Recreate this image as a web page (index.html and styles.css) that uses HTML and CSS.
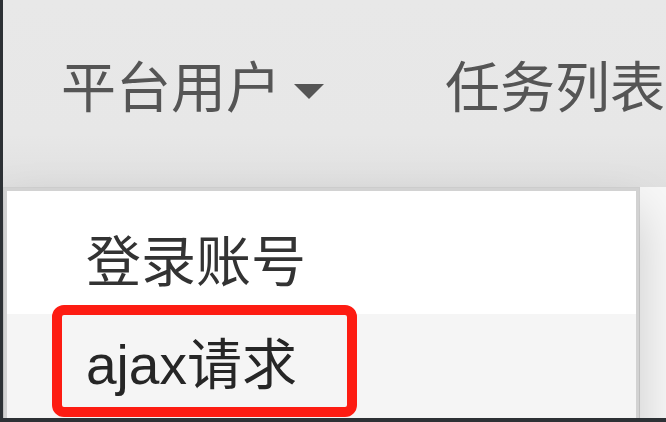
FILE: index.html
```html
<!DOCTYPE html>
<html lang="zh-CN">
<head>
<meta charset="utf-8">
<title>nav</title>
<link rel="stylesheet" href="styles.css">
</head>
<body>
<div class="frame">
  <nav class="navbar">
    <ul class="nav">
      <li class="nav-item open">
        <a class="nav-link" href="#">平台用户<span class="caret"></span></a>
        <ul class="dropdown-menu">
          <li><a class="menu-link" href="#">登录账号</a></li>
          <li><a class="menu-link active" href="#">ajax请求<span class="highlight"></span></a></li>
        </ul>
      </li>
      <li class="nav-item">
        <a class="nav-link" href="#">任务列表</a>
      </li>
    </ul>
  </nav>
</div>
</body>
</html>
```

FILE: styles.css
```css
* { box-sizing: border-box; }
html, body { margin: 0; padding: 0; }
body {
  width: 666px;
  height: 422px;
  overflow: hidden;
  background: #ffffff;
  font-family: "Liberation Sans", "Noto Sans CJK SC", sans-serif;
}
.frame {
  width: 666px;
  height: 422px;
  border-left: 3px solid #2d3135;
  border-bottom: 4px solid #2d3135;
  overflow: hidden;
  background: #f7f7f7;
}
.navbar {
  height: 187px;
  background: linear-gradient(to bottom, #e8e8e8 0, #e7e7e7 72%, #e0e0e0 100%);
}
.nav {
  list-style: none;
  margin: 0;
  padding: 0;
  display: flex;
  height: 100%;
  white-space: nowrap;
}
.nav-item {
  position: relative;
  height: 100%;
}
.nav-link {
  display: flex;
  align-items: center;
  height: 100%;
  padding: 0 63px 10px 58px;
  font-size: 55px;
  line-height: 79px;
  color: #555555;
  text-decoration: none;
}
.caret {
  display: inline-block;
  width: 0;
  height: 0;
  margin-left: 13px;
  margin-top: 6px;
  border-top: 15px solid #555555;
  border-left: 15px solid transparent;
  border-right: 15px solid transparent;
}
.dropdown-menu {
  position: absolute;
  top: 100%;
  left: 0;
  width: 637px;
  margin: 0;
  padding: 20px 0 0;
  list-style: none;
  background: #ffffff;
  background-clip: padding-box;
  border: 4px solid rgba(0, 0, 0, 0.15);
  box-shadow: 0 24px 47px rgba(0, 0, 0, 0.175);
  height: 260px;
}
.menu-link {
  position: relative;
  display: block;
  padding: 12px 79px;
  font-size: 55px;
  line-height: 79px;
  color: #333333;
  text-decoration: none;
}
.menu-link.active {
  background: #f5f5f5;
  color: #262626;
  height: 200px;
}
.highlight {
  position: absolute;
  left: 45px;
  top: -9px;
  width: 305px;
  height: 112px;
  border: 10px solid #fd1c12;
  border-radius: 12px;
}
```
